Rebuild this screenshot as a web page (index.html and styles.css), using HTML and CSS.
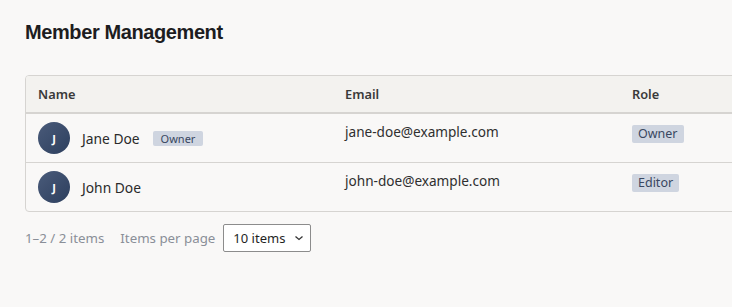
FILE: index.html
```html
<!DOCTYPE html>
<html>
<head>
<meta charset="utf-8">
<link rel="stylesheet" href="styles.css">
</head>
<body>
<div class="page">
  <h1 class="title">Member Management</h1>
  <div class="table">
    <div class="row head">
      <div class="cell">Name</div>
      <div class="cell">Email</div>
      <div class="cell">Role</div>
    </div>
    <div class="row">
      <div class="cell name-cell">
        <span class="avatar">J</span>
        <span class="name">Jane Doe</span>
        <span class="tag small">Owner</span>
      </div>
      <div class="cell email">jane-doe@example.com</div>
      <div class="cell role"><span class="tag">Owner</span></div>
    </div>
    <div class="row last">
      <div class="cell name-cell">
        <span class="avatar">J</span>
        <span class="name">John Doe</span>
      </div>
      <div class="cell email">john-doe@example.com</div>
      <div class="cell role"><span class="tag">Editor</span></div>
    </div>
  </div>
  <div class="footer">
    <span class="count">1–2 / 2 items</span>
    <span class="per">Items per page</span>
    <div class="select">
      <span>10 items</span>
      <svg class="chev" width="10" height="6" viewBox="0 0 10 6"><path d="M1.5 1.5 L5 4.5 L8.5 1.5" fill="none" stroke="#333" stroke-width="1.3"/></svg>
    </div>
  </div>
</div>
</body>
</html>
```

FILE: styles.css
```css
html, body {
  margin: 0;
  padding: 0;
  background: #f9f8f7;
  overflow: hidden;
}
body {
  font-family: "Noto Sans", "Open Sans", sans-serif;
  color: #2b2b2b;
}
.page {
  padding: 0 0 0 25px;
  width: 820px;
}
.title {
  margin: 0;
  padding-top: 20px;
  height: 75px;
  box-sizing: border-box;
  font-family: "Liberation Sans", Arial, sans-serif;
  font-weight: bold;
  font-size: 20px;
  line-height: 24px;
  color: #1d1d1f;
  letter-spacing: -0.4px;
}
.table {
  width: 794px;
  border: 1px solid #d6d4d1;
  border-radius: 4px;
  overflow: hidden;
  background: #f9f8f7;
}
.row {
  display: grid;
  grid-template-columns: 307px 287px 1fr;
  border-bottom: 1px solid #d6d4d1;
  height: 49px;
  box-sizing: border-box;
}
.row.last {
  border-bottom: none;
  height: 48px;
}
.row.head {
  background: #f3f2ef;
  border-bottom: 2px solid #d6d4d1;
  height: 38px;
  font-weight: 600;
  font-size: 12.8px;
  color: #3a3a3a;
  align-items: center;
}
.cell {
  padding: 0 12px;
}
.name-cell {
  display: flex;
  align-items: center;
  font-size: 13.8px;
}
.avatar {
  width: 32px;
  height: 32px;
  border-radius: 50%;
  background: linear-gradient(135deg, #4a5b7a 0%, #2d3f5e 100%);
  color: #fff;
  font-family: "Open Sans", sans-serif;
  font-size: 11px;
  font-weight: 700;
  display: flex;
  align-items: center;
  justify-content: center;
  flex: none;
}
.name {
  margin-left: 12px;
  color: #2a2a2a;
}
.tag {
  display: inline-block;
  background: #cfd5e0;
  color: #394760;
  font-size: 12.5px;
  line-height: 18px;
  padding: 0 6px;
  border-radius: 2px;
}
.tag.small {
  margin-left: 13px;
  font-size: 11px;
  line-height: 15px;
  padding: 0 8px;
}
.email {
  padding-top: 8px;
  font-size: 13.6px;
  line-height: 20px;
  color: #2f2f2f;
}
.role {
  display: flex;
  align-items: flex-start;
  padding-top: 11px;
}
.footer {
  display: flex;
  align-items: center;
  margin-top: 12px;
  height: 28px;
  font-size: 13.3px;
  color: #8a8f98;
}
.per {
  margin-left: 16px;
}
.select {
  margin-left: 8px;
  width: 88px;
  height: 28px;
  box-sizing: border-box;
  border: 1px solid #8c8c8c;
  border-radius: 2px;
  background: #fff;
  display: flex;
  align-items: center;
  padding-left: 9px;
  color: #1f1f1f;
  font-size: 13px;
}
.chev {
  margin-left: 9px;
}
```
